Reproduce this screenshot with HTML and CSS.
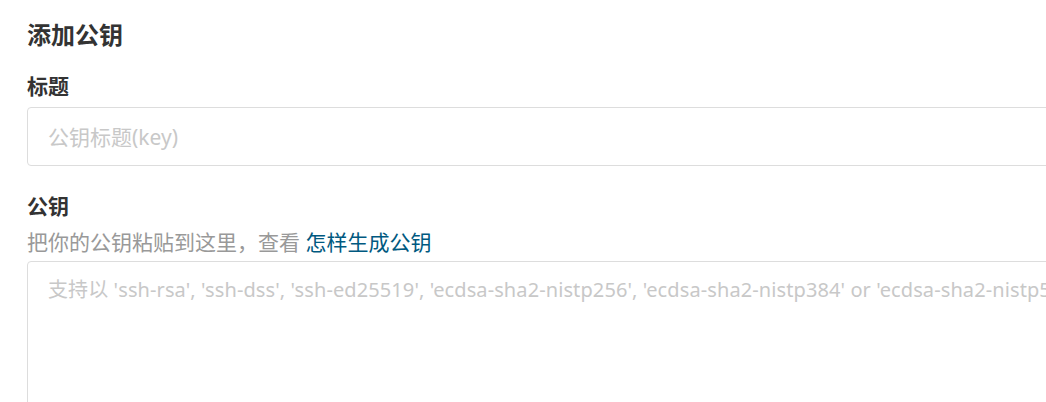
FILE: index.html
```html
<!DOCTYPE html>
<html lang="zh-CN">
<head>
    <meta charset="UTF-8">
    <meta name="viewport" content="width=device-width, initial-scale=1.0">
    <title>添加公钥</title>
    <link rel="stylesheet" href="styles.css">
</head>
<body>

<div class="key-form">
    <h2 class="form-title">添加公钥</h2>

    <div class="field">
        <label for="key-title" class="field-label">标题</label>
        <input type="text" id="key-title" class="field-input" placeholder="公钥标题(key)">
    </div>

    <div class="field field-key">
        <label for="key-body" class="field-label">公钥</label>
        <p class="field-help">把你的公钥粘贴到这里，查看 <a href="#" class="help-link">怎样生成公钥</a></p>
        <textarea id="key-body" class="field-textarea" placeholder="支持以 'ssh-rsa', 'ssh-dss', 'ssh-ed25519', 'ecdsa-sha2-nistp256', 'ecdsa-sha2-nistp384' or 'ecdsa-sha2-nistp521' 开头"></textarea>
    </div>
</div>

</body>
</html>
```

FILE: styles.css
```css
body {
    margin: 0;
    overflow: hidden;
    background: #fff;
    font-family: "Noto Sans", "Noto Sans CJK SC", sans-serif;
    color: #333;
}
.key-form {
    width: 1400px;
    padding: 17px 0 0 27px;
}
.form-title {
    margin: 0;
    font-size: 24px;
    line-height: 36px;
    font-weight: bold;
    color: #333;
}
.field {
    display: flex;
    flex-direction: column;
    margin-top: 18px;
}
.field-key {
    margin-top: 25px;
}
.field-label {
    font-size: 21px;
    line-height: 30px;
    font-weight: bold;
    color: #333;
    margin-bottom: 6px;
}
.field-input,
.field-textarea {
    box-sizing: border-box;
    width: 100%;
    border: 1px solid #ddd;
    border-radius: 4px;
    font-family: inherit;
    font-size: 21px;
    color: #333;
    outline: none;
}
.field-input {
    height: 59px;
    padding: 0 20px;
}
.field-textarea {
    height: 200px;
    padding: 13px 20px;
    font-size: 20px;
    letter-spacing: 0.1px;
    line-height: 30px;
    resize: none;
}
.field-input::placeholder,
.field-textarea::placeholder {
    color: #c8c8c8;
}
.field-help {
    margin: 0 0 4px;
    font-size: 21px;
    line-height: 30px;
    color: #999;
}
.help-link {
    color: #005980;
    text-decoration: none;
}
```
